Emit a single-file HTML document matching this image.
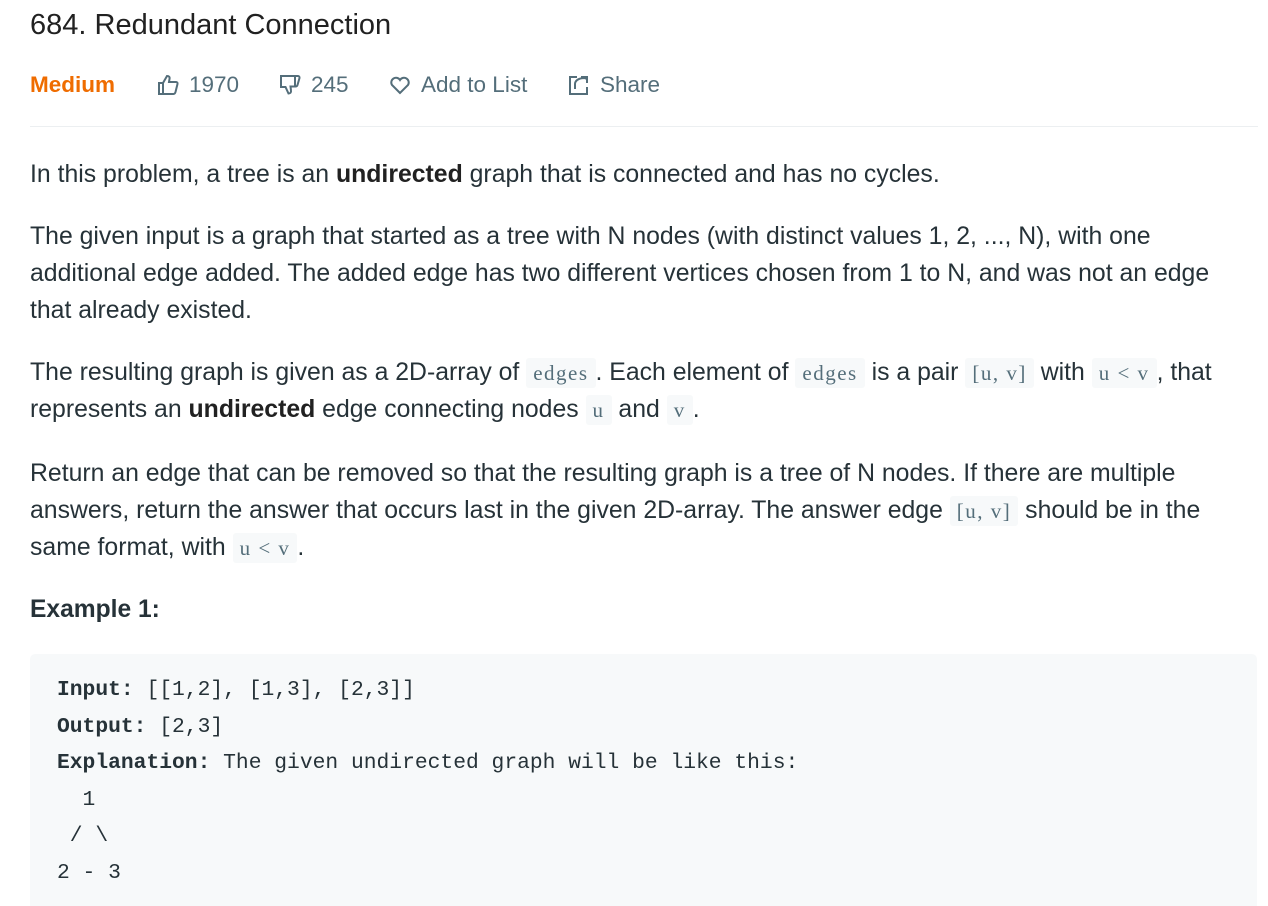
<!DOCTYPE html>
<html><head><meta charset="utf-8"><style>
body{margin:0;background:#fff;font-family:"Liberation Sans","Noto Sans CJK SC",sans-serif;color:#263238;overflow:hidden;height:906px;}
h1{position:absolute;left:30px;top:9px;margin:0;font-size:29px;font-weight:normal;color:#212121;white-space:nowrap;}
.bar{position:absolute;left:30px;top:70px;height:30px;font-size:22.5px;color:#546e7a;white-space:nowrap;}
.bar span{position:absolute;top:0;display:flex;align-items:center;height:30px;}
.bar .m{color:#ef6c00;font-weight:bold;}
.bar svg{margin-right:9px}
hr{position:absolute;left:30px;top:126px;width:1228px;border:0;border-top:1px solid #eceff1;margin:0;}
p{position:absolute;left:30px;width:1240px;margin:0;font-size:24.8px;line-height:37px;white-space:nowrap;}
code{font-family:"Liberation Serif",serif;font-size:21px;line-height:1;background:#f7f9fa;color:#546e7a;padding:3px 7px;border-radius:3px;letter-spacing:1.5px;}
b{font-weight:bold;color:#212121}
.ex{position:absolute;left:30px;top:596px;font-size:24.6px;font-weight:bold;}
pre{position:absolute;left:30px;top:654px;width:1200px;height:234px;margin:0;padding:18px 0 0 27px;background:#f7f9fa;border-radius:5px 5px 0 0;font-family:"Liberation Mono",monospace;font-size:21.3px;line-height:36.6px;color:#263238;}
pre b{color:#263238}
</style></head><body>
<h1>684. Redundant Connection</h1>
<div class="bar"><span class="m" style="left:0">Medium</span>
<span style="left:126px"><svg width="24" height="24" viewBox="0 0 24 24" fill="none" stroke="#546e7a" stroke-width="2"><path d="M3 10h4v11H3zM7 10l4-7c2 0 3 1 2.5 3L13 9h7c1 0 2 1 1.5 2l-2 8c-.3 1-1 2-2 2H7"/></svg>1970</span>
<span style="left:248px"><svg width="24" height="24" viewBox="0 0 24 24" fill="none" stroke="#546e7a" stroke-width="2"><path d="M3 3h17c1 0 1.7 1 1.5 2l-2 7c-.3 1-1 1.5-2 1.5h-5l.5 4c.3 2-.8 3-2.5 3l-3-6.5H3zM17 3v10"/></svg>245</span>
<span style="left:358px"><svg width="24" height="24" viewBox="0 0 24 24" fill="none" stroke="#546e7a" stroke-width="2"><path d="M12 20l-8-8a4.5 4.5 0 0 1 8-5 4.5 4.5 0 0 1 8 5z"/></svg>Add to List</span>
<span style="left:537px"><svg width="24" height="24" viewBox="0 0 24 24" fill="none" stroke="#546e7a" stroke-width="2"><path d="M10 4H3v17h17v-7M14 4h6v6M20 4l-2 2M8 16v-5c0-3 3-6 10-6"/></svg>Share</span></div>
<hr>
<p style="top:156px">In this problem, a tree is an <b>undirected</b> graph that is connected and has no cycles.</p>
<p style="top:218px">The given input is a graph that started as a tree with N nodes (with distinct values 1, 2, ..., N), with one<br>additional edge added. The added edge has two different vertices chosen from 1 to N, and was not an edge<br>that already existed.</p>
<p style="top:354px">The resulting graph is given as a 2D-array of <code>edges</code>. Each element of <code>edges</code> is a pair <code>[u, v]</code> with <code>u &lt; v</code>, that<br>represents an <b>undirected</b> edge connecting nodes <code>u</code> and <code>v</code>.</p>
<p style="top:455px">Return an edge that can be removed so that the resulting graph is a tree of N nodes. If there are multiple<br>answers, return the answer that occurs last in the given 2D-array. The answer edge <code>[u, v]</code> should be in the<br>same format, with <code>u &lt; v</code>.</p>
<div class="ex">Example 1:</div>
<pre><b>Input:</b> [[1,2], [1,3], [2,3]]
<b>Output:</b> [2,3]
<b>Explanation:</b> The given undirected graph will be like this:
  1
 / \
2 - 3</pre>
</body></html>
